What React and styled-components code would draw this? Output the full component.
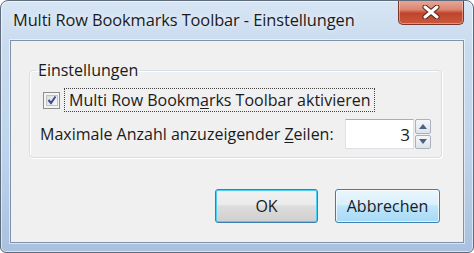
import React from "react";
import styled, { createGlobalStyle } from "styled-components";

const Global = createGlobalStyle`
  html, body { margin: 0; padding: 0; background: #ffffff; }
  body { font-family: "Open Sans", "Noto Sans", sans-serif; }
  * { box-sizing: border-box; }
`;

const Window = styled.div`
  width: 474px;
  height: 253px;
  border: 1px solid #5d6b7c;
  border-radius: 8px 8px 6px 6px;
  background: linear-gradient(to bottom, #d7e5f4 0%, #c9dbef 18%, #bfd4ec 60%, #a9c1df 100%);
  box-shadow: inset 0 0 0 1px rgba(255,255,255,0.55);
  display: flex;
  flex-direction: column;
  overflow: hidden;
`;

const TitleBar = styled.div`
  height: 39px;
  display: flex;
  align-items: flex-start;
  justify-content: space-between;
  padding: 0 9px 0 12px;
`;

const Title = styled.div`
  margin-top: 9px;
  font-size: 16.4px;
  line-height: 20px;
  color: #1b1b1b;
  text-shadow: 0 0 6px rgba(255,255,255,0.9);
  letter-spacing: -0.1px;
  white-space: nowrap;
`;

const CloseButton = styled.div`
  width: 66px;
  height: 25px;
  margin-top: -1px;
  border: 1px solid #7d3528;
  border-top: none;
  border-radius: 0 0 5px 5px;
  background: linear-gradient(to bottom, #e8aa9a 0%, #d98670 40%, #c0432b 55%, #c95a3e 100%);
  box-shadow: inset 0 0 0 1px rgba(255,220,210,0.45);
  display: flex;
  align-items: center;
  justify-content: center;
`;

const Client = styled.div`
  flex: 1;
  margin: 0 9px 9px 9px;
  border: 1px solid #7f93ac;
  box-shadow: 0 0 0 1px rgba(255,255,255,0.55);
  background: #f0f0f0;
  padding: 20px 21px 0 18px;
  display: flex;
  flex-direction: column;
`;

const Group = styled.fieldset`
  margin: 0;
  padding: 9px 10px 8px 10px;
  border: 1px solid #d5dfe5;
  border-radius: 4px;
  box-shadow: inset 1px 1px 0 #ffffff, 1px 1px 0 #ffffff;
  display: flex;
  flex-direction: column;
  gap: 7px;
`;

const Legend = styled.legend`
  margin-left: -4px;
  padding: 0 2px;
  font-size: 16px;
  line-height: 18px;
  color: #1b1b1b;
`;

const CheckRow = styled.div`
  display: flex;
  align-items: center;
  height: 24px;
  gap: 4px;
`;

const Box = styled.div`
  width: 17px;
  height: 17px;
  margin-left: 3px;
  border: 1px solid #8e8f8f;
  background: #f4f4f4;
  padding: 2px;
  display: flex;
`;

const BoxInner = styled.div`
  flex: 1;
  border: 1px solid #c2c2c2;
  background: linear-gradient(135deg, #dcdcdc, #f8f8f8);
  display: flex;
  align-items: center;
  justify-content: center;
`;

const FocusLabel = styled.div`
  height: 24px;
  padding: 0 4px;
  border: 1px dotted #444;
  display: flex;
  align-items: center;
  font-size: 16px;
  color: #1b1b1b;
  white-space: nowrap;
`;

const SpinRow = styled.div`
  display: flex;
  align-items: center;
  justify-content: space-between;
  height: 30px;
`;

const Label = styled.div`
  font-size: 16px;
  color: #1b1b1b;
  white-space: nowrap;
`;

const Spin = styled.div`
  display: flex;
  align-items: stretch;
  height: 30px;
  flex-shrink: 0;
`;

const Field = styled.div`
  width: 69px;
  background: #ffffff;
  border: 1px solid #dbdfe6;
  border-top-color: #abadb3;
  border-left-color: #e2e3ea;
  display: flex;
  align-items: center;
  justify-content: flex-end;
  padding-right: 3px;
  font-size: 17px;
  color: #1b1b1b;
`;

const Arrows = styled.div`
  width: 16px;
  display: flex;
  flex-direction: column;
  gap: 1px;
  margin-left: 1px;
`;

const Arrow = styled.div`
  flex: 1;
  border: 1px solid #a7b1c0;
  border-radius: 2px;
  background: linear-gradient(to bottom, #f4f6f9, #dfe4ea);
  display: flex;
  align-items: center;
  justify-content: center;
`;

const Buttons = styled.div`
  margin-top: 31px;
  margin-right: 2px;
  display: flex;
  justify-content: flex-end;
  gap: 17px;
`;

const Button = styled.div`
  width: ${p => p.$w}px;
  height: 34px;
  border: 1px solid #3c7fb1;
  border-radius: 3px;
  background: ${p =>
    p.$hover
      ? "linear-gradient(to bottom, #eaf6fd 0%, #d9f0fc 45%, #bee6fd 50%, #a7d9f5 100%)"
      : "linear-gradient(to bottom, #f2f2f2 0%, #ebebeb 45%, #dddddd 50%, #cfcfcf 100%)"};
  box-shadow: inset 0 0 0 1px ${p => (p.$hover ? "rgba(255,255,255,0.7)" : "#48d0f7")};
  display: flex;
  align-items: center;
  justify-content: center;
  font-size: 16px;
  color: #1b1b1b;
`;

const U = styled.span`
  text-decoration: underline;
  text-underline-offset: 2px;
`;

export default function App() {
  return (
    <>
      <Global />
      <Window>
        <TitleBar>
          <Title>Multi Row Bookmarks Toolbar - Einstellungen</Title>
          <CloseButton>
            <svg width="18" height="14" viewBox="0 0 18 14">
              <path d="M3 2 L15 12 M15 2 L3 12" stroke="#5a2318" strokeWidth="5" strokeLinecap="round" />
              <path d="M3 2 L15 12 M15 2 L3 12" stroke="#ffffff" strokeWidth="3" strokeLinecap="round" />
            </svg>
          </CloseButton>
        </TitleBar>
        <Client>
          <Group>
            <Legend>Einstellungen</Legend>
            <CheckRow>
              <Box>
                <BoxInner>
                  <svg width="10" height="10" viewBox="0 0 10 10">
                    <path d="M1.5 5 L4 8 L8.5 1.5" fill="none" stroke="#3b4f92" strokeWidth="2" />
                  </svg>
                </BoxInner>
              </Box>
              <FocusLabel>
                Multi Row Bookm<U>a</U>rks Toolbar aktivieren
              </FocusLabel>
            </CheckRow>
            <SpinRow>
              <Label>
                Maximale Anzahl anzuzeigender <U>Z</U>eilen:
              </Label>
              <Spin>
                <Field>3</Field>
                <Arrows>
                  <Arrow>
                    <svg width="8" height="5" viewBox="0 0 8 5"><path d="M0 5 L4 0 L8 5 Z" fill="#4d6185" /></svg>
                  </Arrow>
                  <Arrow>
                    <svg width="8" height="5" viewBox="0 0 8 5"><path d="M0 0 L4 5 L8 0 Z" fill="#4d6185" /></svg>
                  </Arrow>
                </Arrows>
              </Spin>
            </SpinRow>
          </Group>
          <Buttons>
            <Button $w={103}>OK</Button>
            <Button $w={105} $hover>Abbrechen</Button>
          </Buttons>
        </Client>
      </Window>
    </>
  );
}
